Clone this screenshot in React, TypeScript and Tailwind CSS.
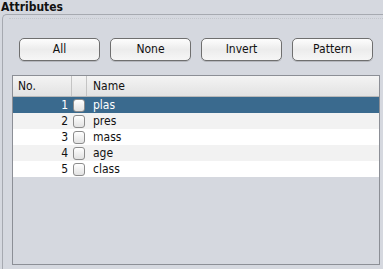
import React from 'react';

const ATTRS = ['plas', 'pres', 'mass', 'age', 'class'];
const BUTTONS = ['All', 'None', 'Invert', 'Pattern'];

const Check: React.FC = () => (
  <div className="w-[12px] h-[13px] rounded-[3px] border border-[#8c8c8c] bg-gradient-to-b from-[#ffffff] via-[#f0f0f0] to-[#e2e2e2]" />
);

const App: React.FC = () => {
  return (
    <div className="w-[383px] h-[269px] overflow-hidden bg-[#d5d8df] text-[#111] font-['DejaVu_Sans_Condensed','DejaVu_Sans',sans-serif]">
      <div className="h-[14px] pl-[1px] text-[12px] font-bold leading-[14px]">Attributes</div>

      <div className="ml-[2px] h-[255px] border-t border-l border-[#a6a9b0] rounded-tl-[5px] pt-[3px] pl-[6px]">
        <div className="border-t border-dotted border-[#c3c6cc] h-[20px]" />

        <div className="flex pl-[10px] gap-[10px]">
          {BUTTONS.map((b) => (
            <button
              key={b}
              className="w-[81px] h-[23px] rounded-[5px] border border-[#6f6f6f] bg-gradient-to-b from-[#fdfdfd] via-[#ececec] to-[#f6f6f6] text-[12px] leading-[21px] shadow-[0_1px_0_rgba(0,0,0,0.15)]"
            >
              {b}
            </button>
          ))}
        </div>

        <div className="mt-[14px] ml-[3px] w-[368px] h-[190px] border border-[#8c8f96] bg-[#d5d8df] text-[12px]">
          <div className="flex h-[21px] border-b border-[#b9b9b9] bg-gradient-to-b from-[#f4f4f4] to-[#e2e2e2] leading-[20px]">
            <div className="w-[59px] pl-[5px] border-r border-[#c4c4c4]">No.</div>
            <div className="w-[15px] border-r border-[#c4c4c4]" />
            <div className="flex-1 pl-[6px]">Name</div>
          </div>
          {ATTRS.map((name, i) => {
            const selected = i === 0;
            const bg = selected ? 'bg-[#3a6a8e] text-white' : i % 2 === 1 ? 'bg-[#f2f2f2]' : 'bg-white';
            return (
              <div key={name} className={`flex items-center h-[16px] leading-[16px] ${bg}`}>
                <div className="w-[56px] text-right pr-[1px]">{i + 1}</div>
                <div className="w-[19px] flex justify-center pl-[1px]">
                  <Check />
                </div>
                <div className="flex-1 pl-[5px]">{name}</div>
              </div>
            );
          })}
        </div>
      </div>
    </div>
  );
};

export default App;
